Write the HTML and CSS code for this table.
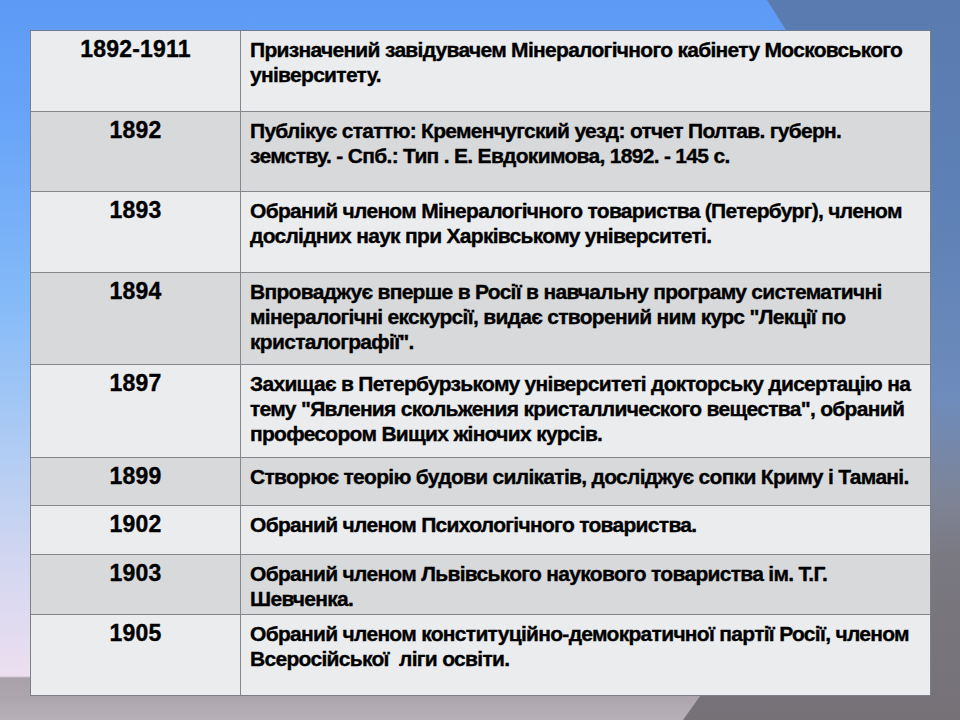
FILE: index.html
```html
<!DOCTYPE html>
<html lang="uk">
<head>
<meta charset="utf-8">
<title>Хронологія</title>
<link rel="stylesheet" href="styles.css">
</head>
<body>
<div class="slide">
  <div class="timeline">
    <div class="year odd">1892-1911</div>
    <div class="event odd">Призначений завідувачем Мінералогічного кабінету Московського університету.</div>
    <div class="year even">1892</div>
    <div class="event even">Публікує статтю: Кременчугский уезд: отчет Полтав. губерн. земству. - Спб.: Тип . Е. Евдокимова, 1892. - 145 с.</div>
    <div class="year odd">1893</div>
    <div class="event odd">Обраний членом Мінералогічного товариства (Петербург), членом дослідних наук при Харківському університеті.</div>
    <div class="year even">1894</div>
    <div class="event even">Впроваджує вперше в Росії в навчальну програму систематичні мінералогічні екскурсії, видає створений ним курс "Лекції по кристалографії".</div>
    <div class="year odd">1897</div>
    <div class="event odd">Захищає в Петербурзькому університеті докторську дисертацію на тему "Явления скольжения кристаллического вещества", обраний професором Вищих жіночих курсів.</div>
    <div class="year even">1899</div>
    <div class="event even">Створює теорію будови силікатів, досліджує сопки Криму і Тамані.</div>
    <div class="year odd">1902</div>
    <div class="event odd">Обраний членом Психологічного товариства.</div>
    <div class="year even">1903</div>
    <div class="event even">Обраний членом Львівського наукового товариства ім. Т.Г. Шевченка.</div>
    <div class="year odd last">1905</div>
    <div class="event odd last">Обраний членом конституційно-демократичної партії Росії, членом Всеросійської&nbsp; ліги освіти.</div>
  </div>
</div>
</body>
</html>
```

FILE: styles.css
```css
html, body {
  margin: 0;
  padding: 0;
}

body {
  width: 960px;
  height: 720px;
  overflow: hidden;
  font-family: "Liberation Sans", Arial, sans-serif;
  color: #000;
}

.slide {
  position: relative;
  width: 960px;
  height: 720px;
  box-sizing: border-box;
  padding: 30px 0 0 30px;
  background: linear-gradient(to bottom,
    #5d9af6 0px,
    #68a4f8 120px,
    #84baf8 300px,
    #b0ccf3 450px,
    #d2d6f0 560px,
    #e4dcf0 640px,
    #ebdfef 676px,
    #a9a1a9 678px,
    #aea6ae 700px,
    #b8b0b8 720px);
}

.slide::before {
  content: "";
  position: absolute;
  inset: 0;
  background: linear-gradient(to bottom,
    #5a7bb0 0px,
    #5d80b6 200px,
    #6e8cbc 400px,
    #7e8496 500px,
    #7a7880 560px,
    #757177 720px);
  clip-path: polygon(767px 0, 960px 0, 960px 720px, 683px 720px, 740px 640px, 830px 100px);
}

.timeline {
  position: relative;
  z-index: 1;
  display: grid;
  width: 901px;
  box-sizing: border-box;
  grid-template-columns: 210px 689px;
  grid-template-rows: 81px 80px 81px 92px 93px 48px 49px 60px 80px;
  border: 1px solid #7c7f86;
  border-top-color: #6f7a92;
}

.year, .event {
  box-sizing: border-box;
  border-bottom: 1px solid #85878c;
  line-height: 25px;
  font-weight: bold;
  padding-top: 6px;
  -webkit-text-stroke: 0.35px #000;
}

.year {
  border-right: 1px solid #85878c;
  text-align: center;
  font-size: 23px;
  letter-spacing: 0.2px;
}

.event {
  font-size: 21px;
  letter-spacing: -0.7px;
  padding-left: 9px;
  padding-right: 4px;
}

.odd { background: #ebecee; }
.even { background: #d8d9db; }

.last { border-bottom: none; }
```
